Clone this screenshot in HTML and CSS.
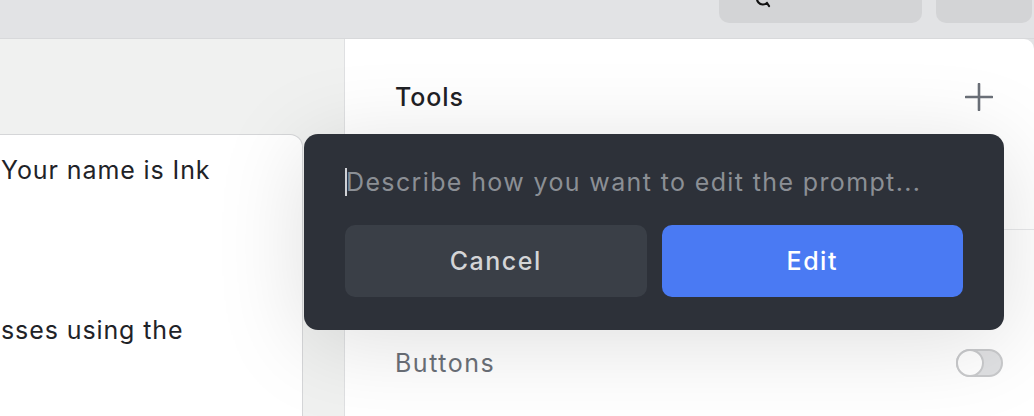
FILE: index.html
```html
<!DOCTYPE html>
<html>
<head>
<meta charset="utf-8">
<link rel="stylesheet" href="styles.css">
</head>
<body>
<div class="topbar">
  <div class="top-btn wide">
    <svg class="top-icon" width="24" height="10" viewBox="0 0 24 10"><path d="M4 -6 a6 6 0 1 0 8 9 M12 3 l2 3" fill="none" stroke="#111" stroke-width="2.2" stroke-linecap="round"/></svg>
  </div>
  <div class="top-btn narrow"></div>
</div>
<div class="main">
  <div class="left">
    <div class="card">
      <p class="line first">Your name is Ink</p>
      <p class="line second">sses using the</p>
    </div>
  </div>
  <div class="right">
    <div class="tools-head">
      <span class="tools-title">Tools</span>
      <svg class="plus" width="28" height="28" viewBox="0 0 28 28"><path d="M14 1v26M1 14h26" stroke="#6b7078" stroke-width="2.6" stroke-linecap="round"/></svg>
    </div>
    <div class="tools-list"></div>
    <div class="settings">
      <div class="setting-row">
        <span class="setting-label">Buttons</span>
        <span class="toggle"><span class="knob"></span></span>
      </div>
    </div>
  </div>
  <div class="popup">
    <div class="prompt"><span class="caret"></span><span class="placeholder">Describe how you want to edit the prompt...</span></div>
    <div class="actions">
      <button class="btn cancel">Cancel</button>
      <button class="btn edit">Edit</button>
    </div>
  </div>
</div>
</body>
</html>
```
FILE: styles.css
```css
* { box-sizing: border-box; }
html, body { margin: 0; padding: 0; }
body {
  width: 1034px;
  height: 416px;
  overflow: hidden;
  background: #e2e3e5;
  font-family: "Inter", "Noto Sans", sans-serif;
  color: #1f2328;
}
.topbar {
  height: 38px;
  display: flex;
  justify-content: flex-end;
  gap: 14px;
  padding-right: 2px;
}
.top-btn {
  height: 23px;
  background: #d3d4d6;
  border-radius: 0 0 10px 10px;
  position: relative;
}
.top-btn.wide { width: 203px; }
.top-btn.narrow { width: 96px; }
.top-icon { position: absolute; left: 36px; top: 0; }
.main {
  position: relative;
  display: flex;
  height: 378px;
  border-top: 1px solid #d8d9db;
}
.left {
  width: 345px;
  background: #f0f1f0;
  border-right: 1px solid #dfe0e2;
  padding-top: 95px;
  overflow: hidden;
}
.card {
  width: 303px;
  height: 300px;
  background: #fff;
  border: 1px solid #d5d6d8;
  border-left: none;
  border-radius: 0 13px 0 0;
}
.line {
  margin: 0;
  font-size: 25px;
  letter-spacing: 0.9px;
  padding-left: 1px;
  color: #1f2328;
  line-height: 30px;
}
.line.first { margin-top: 20px; }
.line.second { margin-top: 130px; }
.right {
  flex: 1;
  background: #fff;
  border-radius: 0 10px 0 0;
}
.tools-head {
  height: 116px;
  display: flex;
  align-items: flex-start;
  justify-content: space-between;
  padding: 44px 41px 0 50px;
}
.tools-title {
  font-size: 25px;
  font-weight: 500;
  letter-spacing: 0.9px;
  color: #1f2125;
  line-height: 28px;
}
.tools-list {
  height: 75px;
  border-bottom: 1px solid #e8e9eb;
}
.settings { padding-top: 118px; }
.setting-row {
  display: flex;
  align-items: center;
  justify-content: space-between;
  padding: 0 31px 0 50px;
  height: 30px;
}
.setting-label {
  font-size: 25px;
  letter-spacing: 1.5px;
  color: #6b7078;
}
.toggle {
  width: 47px;
  height: 28px;
  border-radius: 14px;
  background: #e0e1e3;
  border: 2px solid #c9cacc;
  position: relative;
}
.knob {
  position: absolute;
  left: -2px;
  top: -2px;
  width: 28px;
  height: 28px;
  border-radius: 50%;
  background: #fff;
  border: 2px solid #c9cacc;
}
.popup {
  position: absolute;
  left: 304px;
  top: 95px;
  width: 700px;
  height: 196px;
  background: #2d3139;
  border-radius: 14px;
  box-shadow: 0 12px 90px rgba(0, 0, 0, 0.13);
  padding: 34px 41px 33px 41px;
  display: flex;
  flex-direction: column;
}
.prompt {
  display: flex;
  align-items: center;
  height: 28px;
}
.caret {
  width: 2px;
  height: 28px;
  background: #d0d2d6;
  margin-right: -1px;
}
.placeholder {
  font-size: 25px;
  letter-spacing: 1.37px;
  color: #8b8f95;
  white-space: nowrap;
}
.actions {
  margin-top: auto;
  display: flex;
  gap: 15px;
}
.btn {
  flex: 1;
  height: 72px;
  border: none;
  border-radius: 10px;
  font-family: "Inter", "Noto Sans", sans-serif;
  font-size: 25px;
  font-weight: 500;
  letter-spacing: 1.5px;
  padding: 0;
}
.cancel { background: #3a3f47; color: #d4d5d7; }
.edit { background: #4a7af3; color: #fff; }
```
